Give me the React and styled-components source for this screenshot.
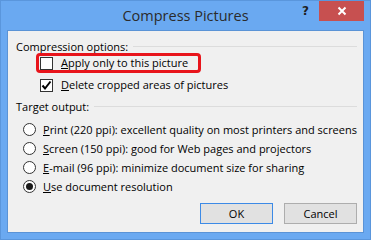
import React from 'react';
import styled, { createGlobalStyle } from 'styled-components';

const GlobalStyle = createGlobalStyle`
  html, body {
    margin: 0;
    padding: 0;
    background: #ffffff;
  }
  body {
    font-family: 'Open Sans', 'Noto Sans', sans-serif;
    font-size: 11px;
    color: #000000;
  }
`;

const compressionOptions = [
  { key: 'A', rest: 'pply only to this picture', checked: false, highlight: true },
  { key: 'D', rest: 'elete cropped areas of pictures', checked: true },
];

const targets = [
  { key: 'P', rest: 'rint (220 ppi): excellent quality on most printers and screens' },
  { key: 'S', rest: 'creen (150 ppi): good for Web pages and projectors' },
  { key: 'E', rest: '-mail (96 ppi): minimize document size for sharing' },
  { key: 'U', rest: 'se document resolution', selected: true },
];

const Dialog = () => (
  <Window>
    <TitleBar>
      <Title>Compress Pictures</Title>
      <Help>?</Help>
      <CloseButton>
        <svg width="10" height="10" viewBox="0 0 10 10">
          <path d="M1.5 1.5 L8.5 8.5 M8.5 1.5 L1.5 8.5" stroke="#ffffff" strokeWidth="2" />
        </svg>
      </CloseButton>
    </TitleBar>
    <Client>
      <GroupHeader>
        <span>Compression options:</span>
        <Rule />
      </GroupHeader>
      <OptionList>
        {compressionOptions.map((o) => (
          <CheckRow key={o.key} $highlight={o.highlight}>
            <CheckBox>
              {o.checked && (
                <svg width="11" height="11" viewBox="0 0 11 11">
                  <path d="M1.5 5.5 L4 8.5 L9.5 1.5" stroke="#000" strokeWidth="2" fill="none" />
                </svg>
              )}
            </CheckBox>
            <Label>
              <u>{o.key}</u>
              {o.rest}
            </Label>
          </CheckRow>
        ))}
      </OptionList>
      <GroupHeader $top={3}>
        <span>Target output:</span>
        <Rule />
      </GroupHeader>
      <RadioList>
        {targets.map((t) => (
          <RadioRow key={t.key}>
            <Radio $selected={t.selected} />
            <Label>
              <u>{t.key}</u>
              {t.rest}
            </Label>
          </RadioRow>
        ))}
      </RadioList>
      <Buttons>
        <Button $default>OK</Button>
        <Button>Cancel</Button>
      </Buttons>
    </Client>
  </Window>
);

export default function App() {
  return (
    <>
      <GlobalStyle />
      <Dialog />
    </>
  );
}

const Window = styled.div`
  box-sizing: border-box;
  width: 371px;
  height: 240px;
  background: #6aa9f1;
  border: 1px solid #5a96dc;
  display: flex;
  flex-direction: column;
  padding: 0 6px 6px 6px;
`;

const TitleBar = styled.div`
  position: relative;
  height: 29px;
  display: flex;
  align-items: center;
  justify-content: center;
  flex-shrink: 0;
`;

const Title = styled.div`
  font-size: 14.5px;
  color: #2b2b2b;
  margin-top: -1px;
`;

const Help = styled.div`
  position: absolute;
  right: 55px;
  top: 3px;
  font-family: 'DejaVu Sans', sans-serif;
  font-weight: bold;
  font-size: 12px;
  color: #1f1f1f;
`;

const CloseButton = styled.div`
  position: absolute;
  right: 0;
  top: 0;
  width: 45px;
  height: 20px;
  background: #c75050;
  display: flex;
  align-items: center;
  justify-content: center;
`;

const Client = styled.div`
  flex: 1;
  background: #f0f0f0;
  border: 1px solid #5a93d6;
  padding: 7px 6px 0 8px;
  display: flex;
  flex-direction: column;
`;

const GroupHeader = styled.div`
  display: flex;
  align-items: center;
  gap: 5px;
  height: 16px;
  margin-top: ${(p) => p.$top || 0}px;
  white-space: nowrap;
`;

const Rule = styled.div`
  flex: 1;
  height: 1px;
  background: #dcdcdc;
  margin-top: 1px;
`;

const OptionList = styled.div`
  display: flex;
  flex-direction: column;
  gap: 2px;
  margin-top: -1px;
  padding-left: 20px;
`;

const CheckRow = styled.div`
  display: flex;
  align-items: center;
  gap: 8px;
  align-self: flex-start;
  height: 14px;
  padding: 0 10px 0 1px;
  border: 3px solid ${(p) => (p.$highlight ? '#e8141b' : 'transparent')};
  border-radius: 4px;
`;

const CheckBox = styled.div`
  box-sizing: border-box;
  flex-shrink: 0;
  width: 13px;
  height: 13px;
  border: 1px solid #333333;
  background: #ffffff;
  display: flex;
  align-items: center;
  justify-content: center;
`;

const Label = styled.span`
  white-space: nowrap;
  line-height: 16px;
`;

const RadioList = styled.div`
  display: flex;
  flex-direction: column;
  padding: 6px 0 0 7px;
`;

const RadioRow = styled.div`
  display: flex;
  align-items: center;
  gap: 7px;
  height: 19px;
`;

const Radio = styled.div`
  box-sizing: border-box;
  flex-shrink: 0;
  width: 13px;
  height: 13px;
  border-radius: 50%;
  border: 1px solid #333333;
  background: #ffffff;
  display: flex;
  align-items: center;
  justify-content: center;

  &::after {
    content: '';
    display: ${(p) => (p.$selected ? 'block' : 'none')};
    width: 7px;
    height: 7px;
    border-radius: 50%;
    background: #1a1a1a;
  }
`;

const Buttons = styled.div`
  display: flex;
  justify-content: flex-end;
  gap: 11px;
  margin-top: auto;
  padding-bottom: 8px;
`;

const Button = styled.div`
  box-sizing: border-box;
  width: 73px;
  height: 21px;
  background: #e1e1e1;
  border: 1px solid ${(p) => (p.$default ? '#3c8ae6' : '#adadad')};
  display: flex;
  align-items: center;
  justify-content: center;
`;
